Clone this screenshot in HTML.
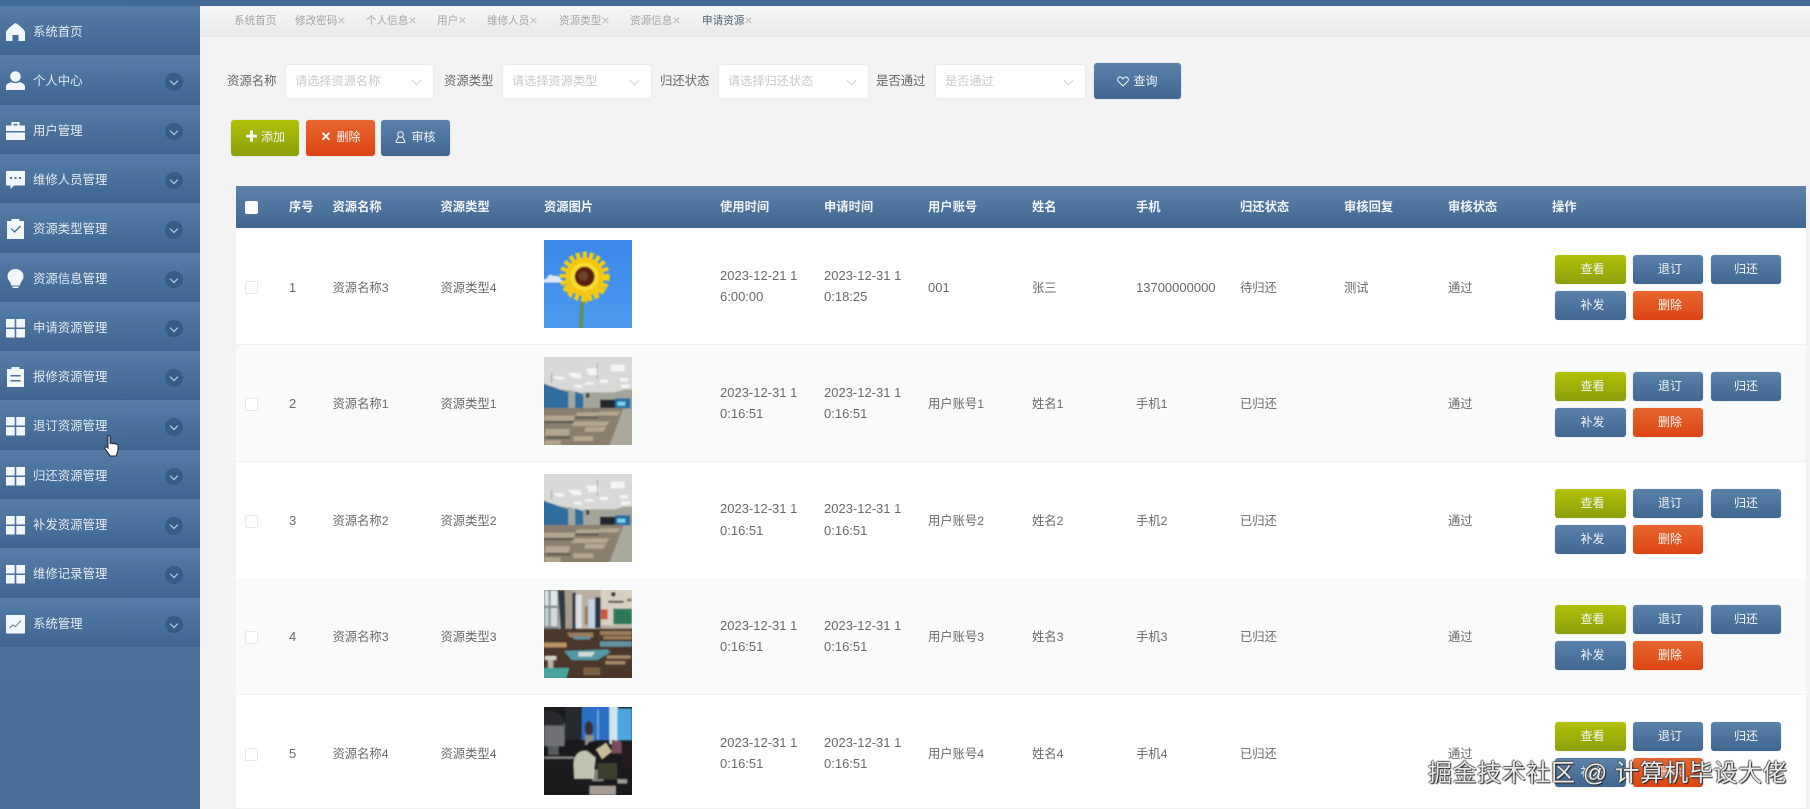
<!DOCTYPE html>
<html lang="zh"><head><meta charset="utf-8"><title>申请资源</title>
<style>
*{box-sizing:border-box;margin:0;padding:0}
html,body{width:1810px;height:809px;overflow:hidden;background:#f3f3f3}
body{font-family:"Liberation Sans","Noto Sans CJK SC",sans-serif;font-size:12.4px;color:#666;position:relative}
#w{position:absolute;inset:0;width:1810px;height:809px;overflow:hidden;filter:blur(.35px)}
.a{position:absolute;white-space:nowrap}
#top{left:0;top:0;width:1810px;height:6px;background:#426a97}
#side{left:0;top:6px;width:200px;height:803px;background:linear-gradient(#3f6791,#4a7199 70%,#4a7098)}
.m{position:absolute;left:0;width:200px;height:49.3px;background:linear-gradient(#567da8,#3e6691);color:#e4ecf3;line-height:53px;padding-left:33px}
.m svg.i{position:absolute;left:6px;top:16px;width:19px;height:20px;fill:#f2f7fb}
.m .c{position:absolute;left:165px;top:18px;width:17.500px;height:17.500px;border-radius:50%;background:#375c87}
.m .c:after{content:"";position:absolute;left:6.300px;top:5px;width:5px;height:5px;border:solid #c9dbea;border-width:0 1.100px 1.100px 0;transform:rotate(45deg)}
#tabs{left:200px;top:6px;width:1610px;height:31px;background:linear-gradient(#f6f7f7,#e9e9e9);font-size:10.6px;color:#a4a4a4;line-height:30px}
#tabs span{position:absolute;white-space:nowrap}
#tabs i{font-style:normal;font-size:14px;line-height:0;color:#bcbcbc;vertical-align:-1px}
.l{top:71px;line-height:20px;color:#666;font-size:12.4px}
.s{top:65px;height:33px;width:148px;background:#fff;border-radius:3px;box-shadow:0 0 2px rgba(0,0,0,.08);color:#c8c8c8;line-height:33px;padding-left:9px;font-size:12.2px}
.s:after{content:"";position:absolute;right:13px;top:12px;width:6px;height:6px;border:solid #d4d4d4;border-width:0 1px 1px 0;transform:rotate(45deg)}
.b{position:absolute;border-radius:3px;color:#f3f6f8;text-align:center;font-size:12px;box-shadow:0 0 1px rgba(0,0,0,.25)}
.g{background:linear-gradient(#b2c108,#8c9f0b)}
.r2{background:linear-gradient(#e7672e,#dc4413)}
.bl{background:linear-gradient(#5a81a9,#3f678f)}
#th{left:236px;top:186px;width:1570px;height:42px;background:linear-gradient(#5c82ab,#3e6791);color:#f1f5f8;font-weight:bold;line-height:42px;font-size:12.3px}
#th span,.t span.x{position:absolute;white-space:nowrap}
.t{position:absolute;left:236px;width:1570px;height:117px;background:#fff;border-bottom:1px solid #f0f0f0;line-height:118.500px;color:#6a6a6a;font-size:12.3px}
.t.e{background:#f9fafa}
.n{font-size:13px}
.cb{position:absolute;left:9px;top:53px;width:13px;height:13px;background:#fff;border:1px solid #e8e8e8;border-radius:2px}
.im{position:absolute;left:308px;top:12px;width:88px;height:88px;display:block}
.t span.d{position:absolute;white-space:normal;line-height:21.500px;top:36.500px;width:84px;font-size:13px}
.k{width:71px;height:29px;line-height:29px}
.p1{left:1319px;padding-left:4px}.p2{left:1397px;width:70px;padding-left:4px}.p3{left:1475px;width:70px}
.y1{top:27px}.y2{top:63px}
</style></head><body><div id="w">
<div class="a" id="top"></div>
<div class="a" id="side"></div>

<div class="m" style="top:6px">系统首页<svg class="i" viewBox="0 0 19 20"><path d="M9.500 1C5.500 3.500 2.500 6 0 9.500V19h6.500v-6h6v6H19V9.500C16.500 6 13.500 3.500 9.500 1z"/></svg></div>
<div class="m" style="top:55.300px">个人中心<svg class="i" viewBox="0 0 19 20"><circle cx="9.500" cy="5.500" r="5.300"/><path d="M0 19v-3.500c0-2.500 3-4 5.500-4.300 2.500 1.200 5.500 1.200 8 0 2.500.3 5.500 1.800 5.500 4.300V19z"/></svg><b class="c"></b></div>
<div class="m" style="top:104.600px">用户管理<svg class="i" viewBox="0 0 19 20"><path d="M5.500 1h8v3.500H19v5.500H0V4.500h5.500zM7.500 2.800v1.700h4V2.800zM0 11.500h19V19H0z"/></svg><b class="c"></b></div>
<div class="m" style="top:153.900px">维修人员管理<svg class="i" viewBox="0 0 19 20"><path fill-rule="evenodd" d="M0 1h19v14.500H8L4.500 19v-3.500H0zM4 7h2v2H4zM8.500 7h2v2h-2zM13 7h2v2h-2z"/></svg><b class="c"></b></div>
<div class="m" style="top:203.200px">资源类型管理<svg class="i" viewBox="0 0 19 20"><path fill-rule="evenodd" d="M5.500 0h8v2H18v18H1V2h4.500zM4.500 9.500l4 4.500 6.500-6.500-1-1-5.500 5.500-3-3z"/></svg><b class="c"></b></div>
<div class="m" style="top:252.500px">资源信息管理<svg class="i" viewBox="0 0 19 20"><path d="M9.500 0C4.500 0 1.500 3.500 1.500 7.500c0 3 2 4.500 3 6.500.5 1 .5 2 .5 2.500h9c0-.5 0-1.500.5-2.500 1-2 3-3.500 3-6.500C17.500 3.500 14.500 0 9.500 0zM6.500 17.500h6V19h-6z"/></svg><b class="c"></b></div>
<div class="m" style="top:301.800px">申请资源管理<svg class="i" viewBox="0 0 19 20"><path d="M0 1h8.700v8.500H0zM10.300 1H19v8.500h-8.700zM0 11h8.700v8.500H0zM10.300 11H19v8.500h-8.700z"/></svg><b class="c"></b></div>
<div class="m" style="top:351.100px">报修资源管理<svg class="i" viewBox="0 0 19 20"><path fill-rule="evenodd" d="M5.500 0h8v2H18v18H1V2h4.500zM4.500 8v1.500h10V8zM4.500 13v1.500h10V13z"/></svg><b class="c"></b></div>
<div class="m" style="top:400.400px">退订资源管理<svg class="i" viewBox="0 0 19 20"><path d="M0 1h8.700v8.500H0zM10.300 1H19v8.500h-8.700zM0 11h8.700v8.500H0zM10.300 11H19v8.500h-8.700z"/></svg><b class="c"></b></div>
<div class="m" style="top:449.700px">归还资源管理<svg class="i" viewBox="0 0 19 20"><path d="M0 1h8.700v8.500H0zM10.300 1H19v8.500h-8.700zM0 11h8.700v8.500H0zM10.300 11H19v8.500h-8.700z"/></svg><b class="c"></b></div>
<div class="m" style="top:499px">补发资源管理<svg class="i" viewBox="0 0 19 20"><path d="M0 1h8.700v8.500H0zM10.300 1H19v8.500h-8.700zM0 11h8.700v8.500H0zM10.300 11H19v8.500h-8.700z"/></svg><b class="c"></b></div>
<div class="m" style="top:548.300px">维修记录管理<svg class="i" viewBox="0 0 19 20"><path d="M0 1h8.700v8.500H0zM10.300 1H19v8.500h-8.700zM0 11h8.700v8.500H0zM10.300 11H19v8.500h-8.700z"/></svg><b class="c"></b></div>
<div class="m" style="top:597.600px">系统管理<svg class="i" viewBox="0 0 19 20"><path d="M0 1h19v18.500H0z"/><path d="M3.500 14l3.500-3 2.500 1.500 5.500-6" fill="none" stroke="#6f8aa6" stroke-width="1.200"/></svg><b class="c"></b></div>

<svg class="a" style="left:104px;top:434px;width:18px;height:24px" viewBox="0 0 18 24"><path d="M4.500 1.500c1 0 1.700.7 1.700 1.800v6.200c.6-.5 2 -.6 2.500.2.600-.5 2-.4 2.500.4.700-.4 2.200-.2 2.600.8.500 1.200.4 5-.4 7.600-.4 1.300-.8 2.500-1.200 3.500H6c-1-2-3.500-5-4.800-7-.6-1-.3-2.200 1-2.200.7 0 1.200.5 1.700 1V3.300c0-1 .1-1.800.6-1.800z" fill="#fff" stroke="#22282e" stroke-width="1.100"/></svg>

<div class="a" id="tabs">
<span style="left:34px">系统首页</span>
<span style="left:95px">修改密码<i>×</i></span>
<span style="left:166px">个人信息<i>×</i></span>
<span style="left:237px">用户<i>×</i></span>
<span style="left:287px">维修人员<i>×</i></span>
<span style="left:359px">资源类型<i>×</i></span>
<span style="left:430px">资源信息<i>×</i></span>
<span style="left:502px;color:#4d6479">申请资源<i>×</i></span>
</div>

<div class="a l" style="left:227px">资源名称</div>
<div class="a s" style="left:286px;width:147px">请选择资源名称</div>
<div class="a l" style="left:444px">资源类型</div>
<div class="a s" style="left:503px">请选择资源类型</div>
<div class="a l" style="left:660px">归还状态</div>
<div class="a s" style="left:719px;width:149px">请选择归还状态</div>
<div class="a l" style="left:876px">是否通过</div>
<div class="a s" style="left:936px;width:149px">是否通过</div>
<div class="b bl" style="left:1094px;top:63px;width:87px;height:36px;line-height:36px"><svg style="vertical-align:-2px;margin-right:4px" width="12" height="11" viewBox="0 0 12 11"><path d="M6 10L1.300 5.300C-.5 3 1.800.2 4 1.200 5 1.600 5.600 2.300 6 3c.4-.7 1-1.400 2-1.800 2.200-1 4.500 1.800 2.700 4.100z" fill="none" stroke="#f3f6f8" stroke-width="1"/></svg>查询</div>

<div class="b g" style="left:231px;top:120px;width:68px;height:36px;line-height:34px"><b style="font-size:13px;margin-right:3px">✚</b>添加</div>
<div class="b r2" style="left:306px;top:120px;width:69px;height:36px;line-height:34px"><b style="font-size:13px;margin-right:5px">✕</b>删除</div>
<div class="b bl" style="left:381px;top:120px;width:69px;height:36px;line-height:34px"><svg style="vertical-align:-2px;margin-right:5px" width="11" height="12" viewBox="0 0 11 12"><circle cx="5.500" cy="3.500" r="2.800" fill="none" stroke="#f3f6f8"/><path d="M3.500 6L1 10.500c0 .5.300 1 1 1h7c.7 0 1-.5 1-1L7.500 6" fill="none" stroke="#f3f6f8"/></svg>审核</div>

<div class="a" id="th">
<b style="position:absolute;left:9px;top:15px;width:13px;height:13px;background:#fff;border-radius:2px"></b>
<span style="left:53px">序号</span><span style="left:96.500px">资源名称</span><span style="left:204.500px">资源类型</span><span style="left:308px">资源图片</span><span style="left:484px">使用时间</span><span style="left:588px">申请时间</span><span style="left:692px">用户账号</span><span style="left:796px">姓名</span><span style="left:900px">手机</span><span style="left:1004px">归还状态</span><span style="left:1108px">审核回复</span><span style="left:1212px">审核状态</span><span style="left:1316px">操作</span>
</div>

<svg width="0" height="0" style="position:absolute"><defs>
<filter id="bf" x="-5%" y="-5%" width="110%" height="110%"><feGaussianBlur stdDeviation="2.200"/></filter>
<linearGradient id="sky" x1="0" y1="0" x2="0" y2="1"><stop offset="0" stop-color="#3b88e9"/><stop offset="1" stop-color="#4c99ef"/></linearGradient>
<symbol id="room" viewBox="12 12 264 264"><rect x="12" y="12" width="264" height="264" fill="#a5a294"/><g filter="url(#bf)">
<rect x="0" y="0" width="290" height="110" fill="#d6d7d5"/>
<path d="M0 0h290v100L180 130H130L20 90H0z" fill="#d8d9d7"/>
<path d="M212 35h42v20h-42zM138 46h36l3 20h-30zM84 60h36l6 15H98zM40 70h30l6 10H52zM240 75h24v10h-24zM180 80h24v10h-24zM135 88h26v7h-26zM100 95h24l4 9h-22zM244 95h26v10h-26z" fill="#f4f5f5"/>
<path d="M172 30v48" stroke="#777" stroke-width="2"/><path d="M35 60v30" stroke="#777" stroke-width="2"/>
<path d="M0 88l85 30v54H0z" fill="#2d6d9e"/>
<path d="M85 110l20 7v50H85z" fill="#a2a79f"/>
<path d="M105 115l25 8v44h-25z" fill="#2f6f9f"/>
<path d="M130 118h146v52H130z" fill="#a3a59b"/>
<rect x="180" y="140" width="46" height="30" fill="#20262a"/>
<rect x="225" y="136" width="46" height="30" fill="#1f6ea3"/>
<rect x="232" y="146" width="24" height="12" fill="#7fd0ee"/>
<rect x="138" y="120" width="10" height="14" fill="#3a3f42"/>
<path d="M0 165h250l-42 120H0z" fill="#8a7f6d"/>
<path d="M12 188h95l-6 15H12zM110 178h70l-10 12h-62zM100 205h110l-12 14H95zM18 228h72l-4 20H14zM138 222h62l-10 14h-58zM100 250h60v14h-60zM14 262h48v14H14zM180 175h62l-10 12h-60z" fill="#b5a68f"/>
<path d="M12 204h90v6H12zM105 190h70v6h-70zM20 250h70v6H20z" fill="#5c564b"/>
<path d="M250 168h30v110h-72z" fill="#aba99c"/>
</g></symbol>
</defs></svg>

<div class="t" style="top:228px;line-height:120px"><b class="cb"></b><span class="x n" style="left:53px">1</span><span class="x" style="left:96.500px">资源名称3</span><span class="x" style="left:204.500px">资源类型4</span>
<svg class="im" viewBox="12 12 264 264"><rect x="12" y="12" width="264" height="264" fill="url(#sky)"/><g filter="url(#bf)">
<path transform="translate(0,-22)" d="M8 160c4-10 10-12 14-10 0-14 12-14 18-8 12-4 20 2 22 10 8 2 6 10-2 10H10z" fill="#dfe9f5"/>
<path d="M121 190h11l-4 95h-12z" fill="#5f9252"/>
<circle cx="134" cy="122" r="58" fill="#f3c610"/>
<circle cx="134" cy="122" r="65" fill="none" stroke="#f8cf10" stroke-width="20" stroke-dasharray="12 8"/>
<path d="M70 145l40 5-18 38zM122 160h28l-10 46zM150 155l30 12-14 25zM172 140l30 22-30 2z" fill="#f4c612"/>
<circle cx="134" cy="122" r="42" fill="#fbdd2e"/>
<circle cx="134" cy="122" r="30" fill="#5a2410"/><circle cx="130" cy="120" r="14" fill="#6b4530"/></g></svg>
<span class="x d" style="left:484px">2023-12-21 1<br>6:00:00</span><span class="x d" style="left:588px">2023-12-31 1<br>0:18:25</span><span class="x n" style="left:692px">001</span><span class="x" style="left:796px">张三</span><span class="x n" style="left:900px">13700000000</span><span class="x" style="left:1004px">待归还</span><span class="x" style="left:1108px">测试</span><span class="x" style="left:1212px">通过</span>
<div class="b g k p1 y1">查看</div><div class="b bl k p2 y1">退订</div><div class="b bl k p3 y1">归还</div><div class="b bl k p1 y2">补发</div><div class="b r2 k p2 y2">删除</div></div>

<div class="t e" style="top:345px"><b class="cb"></b><span class="x n" style="left:53px">2</span><span class="x" style="left:96.500px">资源名称1</span><span class="x" style="left:204.500px">资源类型1</span>
<svg class="im"><use href="#room"/></svg>
<span class="x d" style="left:484px">2023-12-31 1<br>0:16:51</span><span class="x d" style="left:588px">2023-12-31 1<br>0:16:51</span><span class="x" style="left:692px">用户账号1</span><span class="x" style="left:796px">姓名1</span><span class="x" style="left:900px">手机1</span><span class="x" style="left:1004px">已归还</span><span class="x" style="left:1212px">通过</span>
<div class="b g k p1 y1">查看</div><div class="b bl k p2 y1">退订</div><div class="b bl k p3 y1">归还</div><div class="b bl k p1 y2">补发</div><div class="b r2 k p2 y2">删除</div></div>

<div class="t" style="top:461.500px"><b class="cb"></b><span class="x n" style="left:53px">3</span><span class="x" style="left:96.500px">资源名称2</span><span class="x" style="left:204.500px">资源类型2</span>
<svg class="im" style="top:12.500px"><use href="#room"/></svg>
<span class="x d" style="left:484px">2023-12-31 1<br>0:16:51</span><span class="x d" style="left:588px">2023-12-31 1<br>0:16:51</span><span class="x" style="left:692px">用户账号2</span><span class="x" style="left:796px">姓名2</span><span class="x" style="left:900px">手机2</span><span class="x" style="left:1004px">已归还</span><span class="x" style="left:1212px">通过</span>
<div class="b g k p1 y1">查看</div><div class="b bl k p2 y1">退订</div><div class="b bl k p3 y1">归还</div><div class="b bl k p1 y2">补发</div><div class="b r2 k p2 y2">删除</div></div>

<div class="t e" style="top:578px"><b class="cb"></b><span class="x n" style="left:53px">4</span><span class="x" style="left:96.500px">资源名称3</span><span class="x" style="left:204.500px">资源类型3</span>
<svg class="im" viewBox="12 12 264 264"><rect x="12" y="12" width="264" height="264" fill="#6d5847"/><g filter="url(#bf)">
<rect x="0" y="0" width="290" height="130" fill="#b9b0a2"/>
<rect x="182" y="0" width="100" height="118" fill="#d8d0c3"/>
<rect x="0" y="0" width="56" height="130" fill="#7f8b8e"/>
<rect x="14" y="14" width="12" height="45" fill="#dce2e3"/><rect x="32" y="14" width="20" height="45" fill="#e3e7e8"/><rect x="14" y="66" width="12" height="55" fill="#c2cccf"/><rect x="32" y="66" width="20" height="55" fill="#d2dadc"/>
<path d="M54 12h20l4 118H62z" fill="#2e3a42"/>
<rect x="76" y="12" width="22" height="120" fill="#a59a8c"/>
<rect x="97" y="20" width="11" height="118" fill="#363b45"/>
<rect x="107" y="26" width="18" height="100" fill="#dde1e4"/>
<rect x="135" y="60" width="8" height="56" fill="#9a7750"/>
<rect x="145" y="40" width="20" height="86" fill="#c3d1e6"/>
<rect x="165" y="34" width="17" height="92" fill="#2b3344"/>
<rect x="183" y="70" width="20" height="30" fill="#d0553c"/>
<rect x="220" y="68" width="56" height="47" fill="#2a7a5a"/>
<rect x="205" y="44" width="46" height="7" fill="#5a5a55"/><circle cx="220" cy="25" r="7" fill="#3c3b35"/><rect x="262" y="38" width="12" height="8" fill="#6a6a62"/>
<rect x="0" y="128" width="290" height="160" fill="#4b382b"/>
<path d="M80 140h80v14H90zM180 135h95v12h-95zM190 150h85v10h-85z" fill="#9b7a5a"/>
<path d="M100 152h50v8h-50zM180 166h95v16h-95z" fill="#5f93a0"/>
<path d="M12 170h68v14H12z" fill="#bd9264"/>
<path d="M72 195l130-5 10 8-40 24H95z" fill="#4f9aa6"/><path d="M115 198h50l-10 14h-40z" fill="#d0dcd8"/>
<rect x="15" y="210" width="34" height="12" fill="#d6d1c8"/><rect x="24" y="222" width="16" height="26" fill="#b7b0a6"/>
<path d="M0 246h88l-10 32H0z" fill="#45a59c"/>
<path d="M200 208h72v10h-72zM196 225h60v10h-60z" fill="#a28868"/>
<path d="M130 245h50v22h-50z" fill="#7b6144"/>
</g></svg>
<span class="x d" style="left:484px">2023-12-31 1<br>0:16:51</span><span class="x d" style="left:588px">2023-12-31 1<br>0:16:51</span><span class="x" style="left:692px">用户账号3</span><span class="x" style="left:796px">姓名3</span><span class="x" style="left:900px">手机3</span><span class="x" style="left:1004px">已归还</span><span class="x" style="left:1212px">通过</span>
<div class="b g k p1 y1">查看</div><div class="b bl k p2 y1">退订</div><div class="b bl k p3 y1">归还</div><div class="b bl k p1 y2">补发</div><div class="b r2 k p2 y2">删除</div></div>

<div class="t" style="top:695px;height:114px"><b class="cb"></b><span class="x n" style="left:53px">5</span><span class="x" style="left:96.500px">资源名称4</span><span class="x" style="left:204.500px">资源类型4</span>
<svg class="im" viewBox="12 12 264 264"><rect x="12" y="12" width="264" height="264" fill="#1b1b1d"/><g filter="url(#bf)">
<rect x="125" y="0" width="85" height="112" fill="#2a6fc4"/>
<rect x="172" y="20" width="4" height="90" fill="#7fb4e0"/>
<rect x="208" y="0" width="26" height="124" fill="#cfe8ef"/>
<rect x="232" y="16" width="44" height="96" fill="#4ba6e0"/>
<rect x="75" y="0" width="50" height="110" fill="#26292f"/>
<rect x="12" y="60" width="62" height="70" fill="#6f7277"/>
<path d="M12 24c20-6 50 4 60 30v14H12z" fill="#2c2c2e"/>
<rect x="24" y="130" width="32" height="26" fill="#595b5c"/>
<ellipse cx="147" cy="76" rx="13" ry="22" fill="#3a3335"/>
<path d="M135 96h26v30h-26z" fill="#8b8f86"/>
<path d="M100 185c0-30 18-45 40-42l28 20 -8 65h-58z" fill="#c1c2ae"/>
<circle cx="158" cy="132" r="18" fill="#181818"/>
<path d="M168 140l30-22 18 28-30 24z" fill="#c9bd9a"/>
<path d="M160 200h40l-10 35h-35z" fill="#efefdf" opacity=".5"/>
<path d="M215 110l30 6v36h-30z" fill="#7a4b5a"/>
<path d="M245 125h32v70h-32z" fill="#241e22"/>
<rect x="12" y="160" width="90" height="8" fill="#7e8082"/>
<path d="M172 180h60v50h-60z" fill="#3e3c2f"/>
<path d="M148 248h80v28h-80z" fill="#a69c96"/><path d="M232 228h30v14h-30z" fill="#9a9a94"/>
</g></svg>
<span class="x d" style="left:484px">2023-12-31 1<br>0:16:51</span><span class="x d" style="left:588px">2023-12-31 1<br>0:16:51</span><span class="x" style="left:692px">用户账号4</span><span class="x" style="left:796px">姓名4</span><span class="x" style="left:900px">手机4</span><span class="x" style="left:1004px">已归还</span><span class="x" style="left:1212px">通过</span>
<div class="b g k p1 y1">查看</div><div class="b bl k p2 y1">退订</div><div class="b bl k p3 y1">归还</div><div class="b bl k p1 y2">补发</div><div class="b r2 k p2 y2">删除</div></div>

<div class="a" style="left:1428px;top:759px;font-size:24px;letter-spacing:.6px;line-height:30px;color:#e9e9e9;text-shadow:1px 1px 1px #222,-1px 0 1px #555,0 -1px 1px #555">掘金技术社区 @ 计算机毕设大佬</div>
</div></body></html>
